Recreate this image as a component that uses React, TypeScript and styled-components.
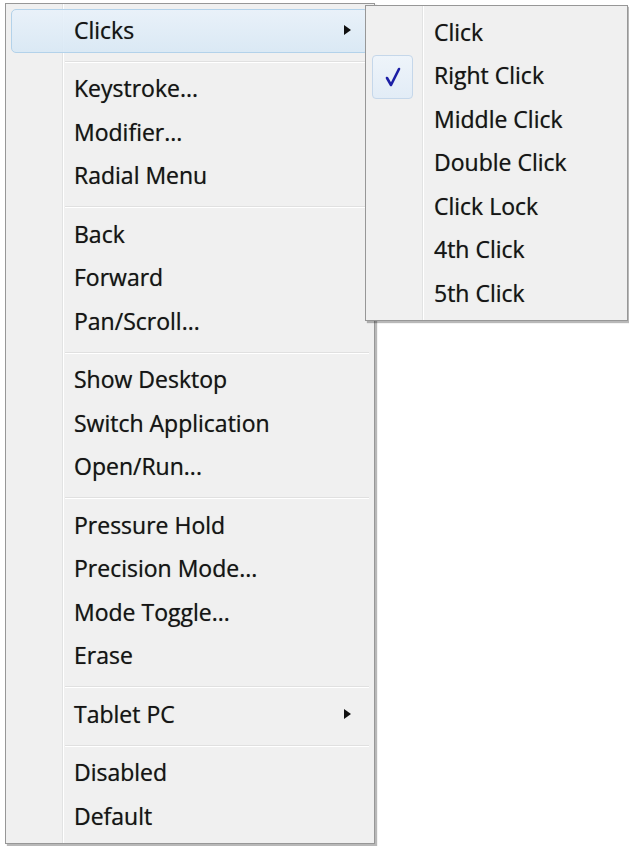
import React from "react";
import styled, { createGlobalStyle } from "styled-components";

const GlobalStyle = createGlobalStyle`
    html, body {
        margin: 0;
        padding: 0;
        background: #ffffff;
    }
    body {
        font-family: "Open Sans", "Noto Sans", "DejaVu Sans", sans-serif;
    }
`;

const Page = styled.div`
    position: relative;
    width: 629px;
    height: 846px;
    padding: 3px 0 0 5px;
    box-sizing: border-box;
    overflow: hidden;
`;

// gutter line sits 56px in from the inner left edge of every menu
const Menu = styled.div<{ $width: number }>`
    width: ${(p) => p.$width}px;
    box-sizing: border-box;
    border: 1px solid #979797;
    padding: 5px 5px 4px 5px;
    background:
        linear-gradient(
            to right,
            transparent 56px,
            #e2e3e3 56px,
            #e2e3e3 57px,
            #ffffff 57px,
            #ffffff 58px,
            transparent 58px
        ),
        #f0f0f0;
    box-shadow: 2px 2px 1px rgba(0, 0, 0, 0.28);
    display: flex;
    flex-direction: column;
`;

const SubMenu = styled(Menu)`
    position: absolute;
    left: 365px;
    top: 5px;
`;

const Row = styled.div<{ $active?: boolean }>`
    position: relative;
    height: 43.5px;
    box-sizing: border-box;
    display: flex;
    align-items: center;
    padding: 0 0 2px 62px;
    font-size: 23px;
    color: #141414;
    text-shadow: 0 0 0.7px rgba(0, 0, 0, 0.55);
    border: 1px solid transparent;
    border-radius: 5px;
    ${(p) =>
        p.$active &&
        `
        background: linear-gradient(to bottom, rgba(232, 241, 250, 0.9), rgba(216, 232, 245, 0.9));
        border-color: #b3d2ea;
    `}
`;

const Label = styled.span`
    flex: 1;
    white-space: nowrap;
`;

const Arrow = styled.span`
    width: 0;
    height: 0;
    margin-right: 17px;
    border-top: 5px solid transparent;
    border-bottom: 5px solid transparent;
    border-left: 7px solid #111;
`;

const CheckBox = styled.span`
    position: absolute;
    left: 0;
    top: -1px;
    width: 41px;
    height: 44px;
    box-sizing: border-box;
    border: 1px solid #c5d7ea;
    border-radius: 4px;
    background: linear-gradient(to bottom, #eef4fa, #e2ecf6);
    display: flex;
    align-items: center;
    justify-content: center;
`;

const Separator = styled.div`
    height: 15px;
    margin: 0 0 0 54px;
    display: flex;
    flex-direction: column;
    &::before {
        content: "";
        margin-top: 8px;
        height: 1px;
        background: #e0e0e0;
    }
    &::after {
        content: "";
        height: 1px;
        background: #ffffff;
    }
`;

type Entry = { label: string; sub?: boolean; active?: boolean } | "sep";

const mainItems: Entry[] = [
    { label: "Clicks", sub: true, active: true },
    "sep",
    { label: "Keystroke..." },
    { label: "Modifier..." },
    { label: "Radial Menu" },
    "sep",
    { label: "Back" },
    { label: "Forward" },
    { label: "Pan/Scroll..." },
    "sep",
    { label: "Show Desktop" },
    { label: "Switch Application" },
    { label: "Open/Run..." },
    "sep",
    { label: "Pressure Hold" },
    { label: "Precision Mode..." },
    { label: "Mode Toggle..." },
    { label: "Erase" },
    "sep",
    { label: "Tablet PC", sub: true },
    "sep",
    { label: "Disabled" },
    { label: "Default" },
];

const clickItems = ["Click", "Right Click", "Middle Click", "Double Click", "Click Lock", "4th Click", "5th Click"];

const Check = () => (
    <svg width="16" height="20" viewBox="0 0 16 20">
        <path d="M2 11 L6 18 L14 2" fill="none" stroke="#1c1fa6" strokeWidth="2.6" strokeLinejoin="round" strokeLinecap="round" />
    </svg>
);

const App = () => {
    return (
        <Page>
            <GlobalStyle />
            <Menu $width={370}>
                {mainItems.map((item, i) =>
                    item === "sep" ? (
                        <Separator key={i} />
                    ) : (
                        <Row key={i} $active={item.active}>
                            <Label>{item.label}</Label>
                            {item.sub && <Arrow />}
                        </Row>
                    )
                )}
            </Menu>
            <SubMenu $width={263}>
                {clickItems.map((label) => (
                    <Row key={label}>
                        {label === "Right Click" && (
                            <CheckBox>
                                <Check />
                            </CheckBox>
                        )}
                        <Label>{label}</Label>
                    </Row>
                ))}
            </SubMenu>
        </Page>
    );
};

export default App;
